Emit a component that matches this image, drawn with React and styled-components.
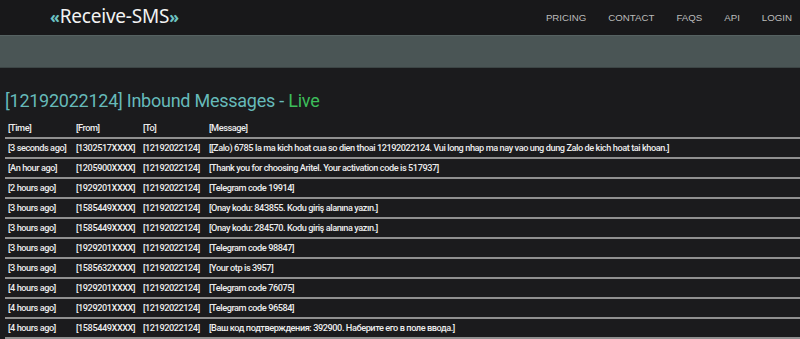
import React from "react";
import styled, { createGlobalStyle } from "styled-components";

const Global = createGlobalStyle`
  html, body { margin: 0; padding: 0; background: #1b1b1d; }
  body { font-family: Roboto, "Noto Sans", sans-serif; overflow: hidden; }
`;

const Header = styled.header`
  height: 35px;
  display: flex;
  align-items: center;
  justify-content: space-between;
  padding: 0 8px 0 50px;
  background: #18181a;
`;

const Logo = styled.div`
  font-family: "Noto Sans", sans-serif;
  font-size: 19px;
  color: #f2f2f2;
  letter-spacing: -0.2px;
  margin-top: -4px;
`;

const Quote = styled.span`
  color: #6cc3c3;
  font-weight: 700;
  font-size: 16px;
`;

const Nav = styled.nav`
  display: flex;
  gap: 22px;
`;

const NavLink = styled.a`
  font-family: "Liberation Sans", Arial, sans-serif;
  font-size: 9.7px;
  color: #bcbcbc;
  text-decoration: none;
`;

const Band = styled.div`
  height: 31px;
  background: #4a5555;
  border-top: 1px solid #566262;
  border-bottom: 1px solid #3c4545;
`;

const Main = styled.main`
  padding: 21px 0 0 5px;
`;

const Title = styled.h1`
  margin: 0 0 6px 0;
  font-family: Roboto, sans-serif;
  font-weight: 400;
  font-size: 18px;
  letter-spacing: -0.25px;
  line-height: 24px;
  color: #66baba;
`;

const Live = styled.span`
  color: #3dbd5b;
`;

const Table = styled.div`
  display: grid;
  grid-template-columns: 68px 67px 66px 1fr;
`;

const Row = styled.div`
  display: contents;
`;

const Cell = styled.div`
  height: 18px;
  line-height: 18px;
  padding-left: 3px;
  font-family: Roboto, sans-serif;
  font-weight: 500;
  font-size: 9.2px;
  letter-spacing: -0.44px;
  color: #ededed;
  white-space: nowrap;
  border-bottom: 2px solid #909090;
`;

const rows = [
  ["[3 seconds ago]", "[1302517XXXX]", "[12192022124]", "[[Zalo) 6785 la ma kich hoat cua so dien thoai 12192022124. Vui long nhap ma nay vao ung dung Zalo de kich hoat tai khoan.]"],
  ["[An hour ago]", "[1205900XXXX]", "[12192022124]", "[Thank you for choosing Aritel. Your activation code is 517937]"],
  ["[2 hours ago]", "[1929201XXXX]", "[12192022124]", "[Telegram code 19914]"],
  ["[3 hours ago]", "[1585449XXXX]", "[12192022124]", "[Onay kodu: 843855. Kodu giriş alanına yazın.]"],
  ["[3 hours ago]", "[1585449XXXX]", "[12192022124]", "[Onay kodu: 284570. Kodu giriş alanına yazın.]"],
  ["[3 hours ago]", "[1929201XXXX]", "[12192022124]", "[Telegram code 98847]"],
  ["[3 hours ago]", "[1585632XXXX]", "[12192022124]", "[Your otp is 3957]"],
  ["[4 hours ago]", "[1929201XXXX]", "[12192022124]", "[Telegram code 76075]"],
  ["[4 hours ago]", "[1929201XXXX]", "[12192022124]", "[Telegram code 96584]"],
  ["[4 hours ago]", "[1585449XXXX]", "[12192022124]", "[Ваш код подтверждения: 392900. Наберите его в поле ввода.]"],
];

export default function App() {
  return (
    <>
      <Global />
      <Header>
        <Logo>
          <Quote>«</Quote>Receive-SMS<Quote>»</Quote>
        </Logo>
        <Nav>
          <NavLink>PRICING</NavLink>
          <NavLink>CONTACT</NavLink>
          <NavLink>FAQS</NavLink>
          <NavLink>API</NavLink>
          <NavLink>LOGIN</NavLink>
        </Nav>
      </Header>
      <Band />
      <Main>
        <Title>
          [12192022124] Inbound Messages - <Live>Live</Live>
        </Title>
        <Table>
          <Row>
            <Cell>[Time]</Cell>
            <Cell>[From]</Cell>
            <Cell>[To]</Cell>
            <Cell>[Message]</Cell>
          </Row>
          {rows.map((r, i) => (
            <Row key={i}>
              {r.map((c, j) => (
                <Cell key={j}>{c}</Cell>
              ))}
            </Row>
          ))}
        </Table>
      </Main>
    </>
  );
}
